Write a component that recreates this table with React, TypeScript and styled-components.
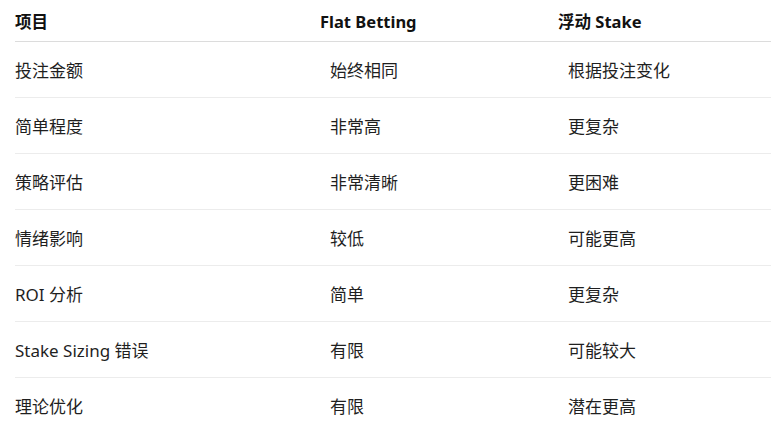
import styled, { createGlobalStyle } from 'styled-components'

const GlobalStyle = createGlobalStyle`
  html, body {
    margin: 0;
    padding: 0;
    background: #fff;
  }
  body {
    font-family: 'Noto Sans', 'Noto Sans CJK SC', sans-serif;
    color: #1f1f1f;
  }
`

const Table = styled.div`
  width: 756px;
  margin-left: 15px;
  display: grid;
  grid-template-columns: 305px 238px 1fr;
`

const Row = styled.div`
  display: contents;
`

const HeadCell = styled.div`
  height: 42px;
  box-sizing: border-box;
  display: flex;
  align-items: center;
  padding-top: 1px;
  font-size: 16.5px;
  font-weight: 700;
  color: #111;
  border-bottom: 1px solid #dcdcdc;
`

const Cell = styled.div<{ $indent?: boolean; $last?: boolean }>`
  height: 56px;
  box-sizing: border-box;
  display: flex;
  align-items: center;
  padding-left: ${(p) => (p.$indent ? '10px' : '0')};
  padding-bottom: 1px;
  font-size: 17px;
  color: #1f1f1f;
  border-bottom: ${(p) => (p.$last ? 'none' : '1px solid #ececec')};
`

const rows: [string, string, string][] = [
  ['投注金额', '始终相同', '根据投注变化'],
  ['简单程度', '非常高', '更复杂'],
  ['策略评估', '非常清晰', '更困难'],
  ['情绪影响', '较低', '可能更高'],
  ['ROI 分析', '简单', '更复杂'],
  ['Stake Sizing 错误', '有限', '可能较大'],
  ['理论优化', '有限', '潜在更高'],
]

export default function App() {
  return (
    <>
      <GlobalStyle />
      <Table>
        <Row>
          <HeadCell>项目</HeadCell>
          <HeadCell>Flat Betting</HeadCell>
          <HeadCell>浮动 Stake</HeadCell>
        </Row>
        {rows.map((r, i) => {
          const last = i === rows.length - 1
          return (
            <Row key={r[0]}>
              <Cell $last={last}>{r[0]}</Cell>
              <Cell $indent $last={last}>{r[1]}</Cell>
              <Cell $indent $last={last}>{r[2]}</Cell>
            </Row>
          )
        })}
      </Table>
    </>
  )
}
